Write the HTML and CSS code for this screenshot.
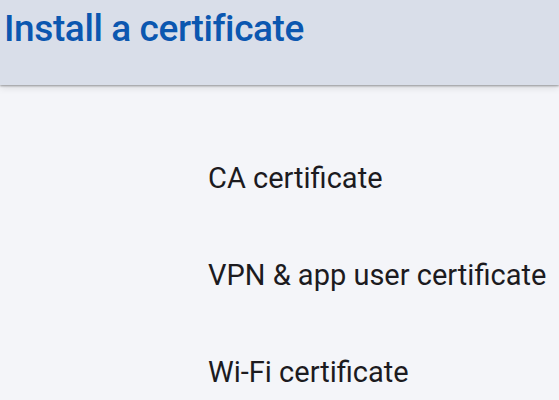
FILE: index.html
```html
<!DOCTYPE html>
<html>
<head>
<meta charset="utf-8">
<link rel="stylesheet" href="styles.css">
</head>
<body>
<header class="appbar">
  <h1 class="title">Install a certificate</h1>
</header>
<main class="list">
  <div class="item">CA certificate</div>
  <div class="item">VPN &amp; app user certificate</div>
  <div class="item">Wi-Fi certificate</div>
</main>
</body>
</html>
```
FILE: styles.css
```css
html, body {
  margin: 0;
  padding: 0;
  height: 100%;
  overflow: hidden;
}
body {
  background: #f4f5f9;
  font-family: Roboto, "Noto Sans", sans-serif;
}
.appbar {
  height: 85px;
  background: #d9dee9;
  box-shadow: 0 1px 2px rgba(0,0,0,0.35), 0 3px 7px rgba(0,0,0,0.10);
  position: relative;
  z-index: 1;
}
.title {
  margin: 0;
  padding: 7px 0 0 4px;
  font-size: 37px;
  font-weight: 500;
  letter-spacing: -0.4px;
  color: #0b57b0;
  line-height: 44px;
}
.list {
  padding: 78px 0 0 208px;
  display: flex;
  flex-direction: column;
  gap: 67px;
}
.item {
  font-size: 29px;
  color: #1c1b1f;
  line-height: 30px;
}
```
